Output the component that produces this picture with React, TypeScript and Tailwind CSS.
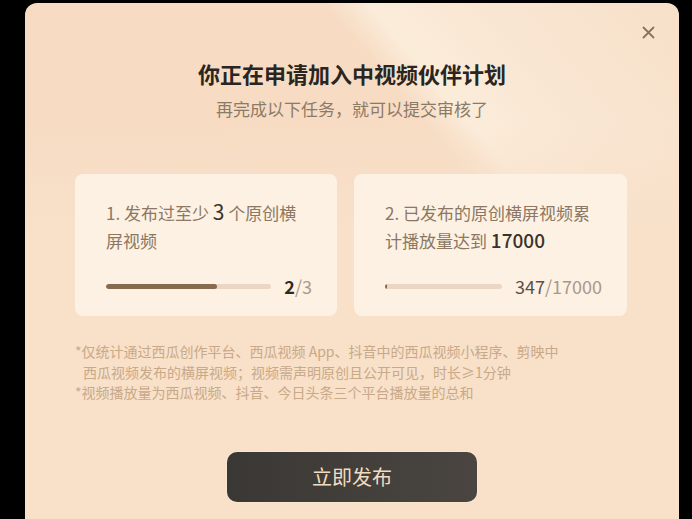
import React from "react";

/**
 * App.tsx
 * 中视频伙伴计划申请弹窗
 */

const FONT = '"Noto Sans CJK SC", "Noto Sans", "Liberation Sans", sans-serif';

type Task = {
  width: string;
  percent: number;
  text: React.ReactNode;
  done: string;
  total: string;
  doneBold?: boolean;
};

const TASKS: Task[] = [
  {
    width: "w-[262px]",
    percent: 67,
    text: (
      <>
        1. 发布过至少 <span className="text-[21px] leading-none text-[#3a322b]">3</span> 个原创横屏视频
      </>
    ),
    done: "2",
    total: "/3",
    doneBold: true,
  },
  {
    width: "w-[273px]",
    percent: 1.5,
    text: (
      <>
        2. 已发布的原创横屏视频累计播放量达到 <span className="text-[19px] font-medium leading-none text-[#3a322b]">17000</span>
      </>
    ),
    done: "347",
    total: "/17000",
  },
];

function TaskCard({ task }: { task: Task }) {
  return (
    <div className={`${task.width} h-[142px] rounded-[8px] bg-[#fdf1e3] pl-[31px] pr-[25px] pt-[25px]`}>
      <p className="h-[56px] pr-[5px] text-[17px] leading-[28px] text-[#8c7862]">{task.text}</p>
      <div className="mt-[19px] flex items-center gap-[13px]">
        <div className="h-[5px] flex-1 overflow-hidden rounded-full bg-[#ead6c3]">
          <div className="h-full rounded-full bg-[#876b4f]" style={{ width: `${task.percent}%` }} />
        </div>
        <span className="text-[18px] leading-[24px]">
          <span className={task.doneBold ? "font-semibold text-[#2f2924]" : "text-[#5b5047]"}>{task.done}</span>
          <span className="text-[#a8998a]">{task.total}</span>
        </span>
      </div>
    </div>
  );
}

export default function App() {
  return (
    <div className="h-[519px] w-[692px] overflow-hidden bg-black pl-[25px] pt-[3px]" style={{ fontFamily: FONT }}>
      <div className="relative h-[540px] w-[654px] rounded-t-[12px] bg-[linear-gradient(to_bottom,rgba(248,224,201,0)_0%,rgba(248,224,201,0)_22%,#f8e0c9_42%),linear-gradient(50deg,#f6dbc2_0%,#f7dcc3_68%,#fbecda_72%,#f9e6d2_82%,#f7e0c9_100%)] pt-[55px]">
        <button className="absolute right-[24px] top-[23px] text-[#86735f]" aria-label="close">
          <svg width="13" height="13" viewBox="0 0 13 13" fill="none" stroke="currentColor" strokeWidth="1.8" strokeLinecap="round">
            <path d="M1.5 1.5l10 10M11.5 1.5l-10 10" />
          </svg>
        </button>

        <h1 className="text-center text-[22px] font-bold leading-[30px] text-[#2a2520]">你正在申请加入中视频伙伴计划</h1>
        <p className="mt-[9px] text-center text-[17px] leading-[24px] text-[#8c7a68]">再完成以下任务，就可以提交审核了</p>

        <div className="mt-[53px] flex gap-[17px] pl-[50px]">
          {TASKS.map((task, i) => (
            <TaskCard key={i} task={task} />
          ))}
        </div>

        <div className="mt-[25px] pl-[50px] text-[14px] leading-[20.5px] text-[#c8a988]">
          <p>*仅统计通过西瓜创作平台、西瓜视频 App、抖音中的西瓜视频小程序、剪映中</p>
          <p className="pl-[8px]">西瓜视频发布的横屏视频；视频需声明原创且公开可见，时长≥1分钟</p>
          <p>*视频播放量为西瓜视频、抖音、今日头条三个平台播放量的总和</p>
        </div>

        <div className="mt-[49px] flex justify-center">
          <button className="h-[50px] w-[250px] rounded-[10px] bg-[linear-gradient(90deg,#3a3835,#4a4540)] text-[20px] text-[#f2dcc0] shadow-[0_0_0_1px_rgba(255,240,220,0.35)]">
            立即发布
          </button>
        </div>
      </div>
    </div>
  );
}
